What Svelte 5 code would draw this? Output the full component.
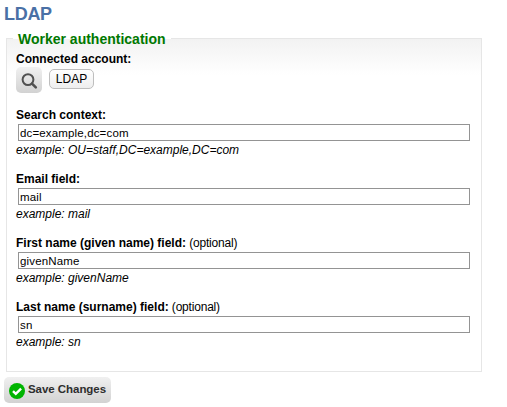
<script>
  const fields = [
    { id: 'context', label: 'Search context:', optional: false, value: 'dc=example,dc=com', example: 'OU=staff,DC=example,DC=com' },
    { id: 'email', label: 'Email field:', optional: false, value: 'mail', example: 'mail' },
    { id: 'first', label: 'First name (given name) field:', optional: true, value: 'givenName', example: 'givenName' },
    { id: 'last', label: 'Last name (surname) field:', optional: true, value: 'sn', example: 'sn' }
  ];
</script>

<main>
  <h1>LDAP</h1>
  <fieldset>
    <legend>Worker authentication</legend>
    <div class="label"><b>Connected account:</b></div>
    <div class="account">
      <button class="search" type="button" aria-label="Search">
        <svg width="18" height="18" viewBox="0 0 18 18" fill="none" stroke="#505050">
          <circle cx="7" cy="7.6" r="5.4" stroke-width="2" />
          <path d="M11 11.6l3.8 3.8" stroke-width="2.6" stroke-linecap="round" />
        </svg>
      </button>
      <span class="bubble">LDAP</span>
    </div>
    {#each fields as field (field.id)}
      <div class="field">
        <label class="label" for={field.id}><b>{field.label}</b>{#if field.optional}<span class="optional">{' '}(optional)</span>{/if}</label>
        <input id={field.id} type="text" value={field.value} spellcheck="false" />
        <i>example: {field.example}</i>
      </div>
    {/each}
  </fieldset>
  <button class="save" type="button">
    <svg width="16" height="16" viewBox="0 0 16 16">
      <circle cx="8" cy="8" r="8" fill="#00b400" />
      <path d="M4 8.1l2.8 2.8 5.3-5.3" fill="none" stroke="#fff" stroke-width="2.4" />
    </svg>
    <span>Save Changes</span>
  </button>
</main>

<style>
  :global(body) {
    margin: 0;
    background: #fff;
  }
  main {
    box-sizing: border-box;
    width: 507px;
    height: 407px;
    padding: 3px 0 0 4px;
    overflow: hidden;
    font-family: "Liberation Sans", Arial, sans-serif;
    font-size: 12px;
    line-height: 16px;
    color: #000;
  }
  h1 {
    margin: 0;
    font-size: 18px;
    line-height: 22px;
    letter-spacing: -0.3px;
    color: #4a70a6;
  }
  fieldset {
    box-sizing: border-box;
    width: 476px;
    height: 342px;
    margin: 5px 0 0 2px;
    padding: 0 9px;
    border: 1px solid #e6e6e6;
    background: linear-gradient(#f2f2f2, #fff 36px) no-repeat;
  }
  legend {
    margin-left: -3px;
    padding: 1px 5px 0;
    font-size: 14px;
    font-weight: bold;
    line-height: 16px;
    color: #007800;
  }
  .label {
    display: block;
    height: 17px;
    line-height: 16px;
    white-space: nowrap;
  }
  legend + .label {
    height: 16px;
    margin-top: 4px;
  }
  .optional {
    letter-spacing: -0.2px;
  }
  .account {
    display: flex;
    align-items: flex-start;
    gap: 7px;
    height: 40px;
  }
  button {
    display: flex;
    align-items: center;
    box-sizing: border-box;
    border: 0;
    border-radius: 5px;
    background: linear-gradient(#f0f0f0, #d2d2d2);
    font-family: inherit;
  }
  .search {
    width: 26px;
    height: 26px;
    padding: 1px 0 0 1px;
    justify-content: center;
  }
  .bubble {
    box-sizing: border-box;
    width: 45px;
    height: 20px;
    margin-top: 2px;
    border: 1px solid #bebebe;
    border-radius: 5px;
    background: linear-gradient(#fff, #eee);
    line-height: 18px;
    text-align: center;
  }
  .field {
    height: 64px;
  }
  input {
    display: block;
    box-sizing: border-box;
    width: 452px;
    height: 17px;
    margin: 0 0 0 2px;
    padding: 1px 1px 0;
    border: 1px solid #949494;
    border-radius: 0;
    background: #fff;
    font-family: inherit;
    font-size: 11.5px;
    letter-spacing: 0.15px;
    color: #000;
    outline: 0;
  }
  i {
    display: block;
    margin-top: 1px;
    white-space: nowrap;
  }
  .save {
    gap: 3px;
    width: 107px;
    height: 26px;
    margin-top: 5px;
    padding: 0 0 0 5px;
    font-size: 11.5px;
    font-weight: bold;
    color: #2e2e2e;
    white-space: nowrap;
  }
  .save svg {
    flex: none;
    margin-top: 2px;
  }
  .save span {
    letter-spacing: -0.05px;
    margin-top: -2px;
  }
</style>
